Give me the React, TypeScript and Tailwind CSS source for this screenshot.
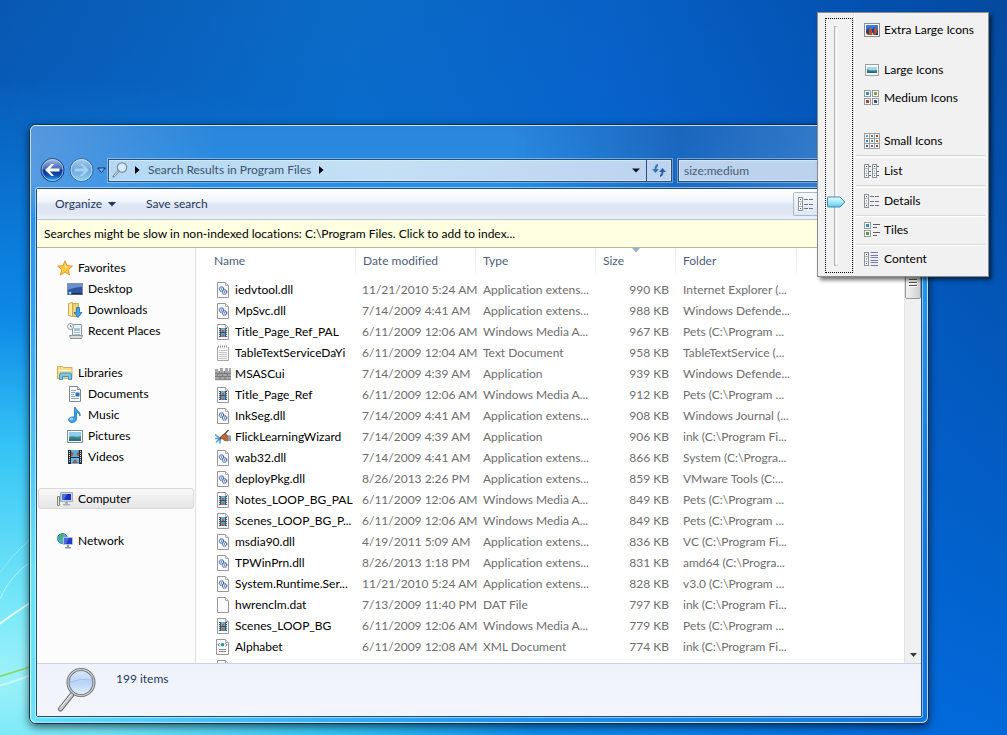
import { useState } from "react";
import type { ReactNode } from "react";

type FileKind = "dll" | "video" | "text" | "wall" | "flick" | "blank" | "xml";

interface FileRow {
  kind: FileKind;
  name: string;
  date: string;
  type: string;
  size: string;
  folder: string;
}

const EXT = "Application extens...";
const WMA = "Windows Media A...";

const files: FileRow[] = [
  { kind: "dll", name: "iedvtool.dll", date: "11/21/2010 5:24 AM", type: EXT, size: "990 KB", folder: "Internet Explorer (..." },
  { kind: "dll", name: "MpSvc.dll", date: "7/14/2009 4:41 AM", type: EXT, size: "988 KB", folder: "Windows Defende..." },
  { kind: "video", name: "Title_Page_Ref_PAL", date: "6/11/2009 12:06 AM", type: WMA, size: "967 KB", folder: "Pets (C:\\Program ..." },
  { kind: "text", name: "TableTextServiceDaYi", date: "6/11/2009 12:04 AM", type: "Text Document", size: "958 KB", folder: "TableTextService (..." },
  { kind: "wall", name: "MSASCui", date: "7/14/2009 4:39 AM", type: "Application", size: "939 KB", folder: "Windows Defende..." },
  { kind: "video", name: "Title_Page_Ref", date: "6/11/2009 12:06 AM", type: WMA, size: "912 KB", folder: "Pets (C:\\Program ..." },
  { kind: "dll", name: "InkSeg.dll", date: "7/14/2009 4:41 AM", type: EXT, size: "908 KB", folder: "Windows Journal (..." },
  { kind: "flick", name: "FlickLearningWizard", date: "7/14/2009 4:39 AM", type: "Application", size: "906 KB", folder: "ink (C:\\Program Fi..." },
  { kind: "dll", name: "wab32.dll", date: "7/14/2009 4:41 AM", type: EXT, size: "866 KB", folder: "System (C:\\Progra..." },
  { kind: "dll", name: "deployPkg.dll", date: "8/26/2013 2:26 PM", type: EXT, size: "859 KB", folder: "VMware Tools (C:..." },
  { kind: "video", name: "Notes_LOOP_BG_PAL", date: "6/11/2009 12:06 AM", type: WMA, size: "849 KB", folder: "Pets (C:\\Program ..." },
  { kind: "video", name: "Scenes_LOOP_BG_P...", date: "6/11/2009 12:06 AM", type: WMA, size: "849 KB", folder: "Pets (C:\\Program ..." },
  { kind: "dll", name: "msdia90.dll", date: "4/19/2011 5:09 AM", type: EXT, size: "836 KB", folder: "VC (C:\\Program Fi..." },
  { kind: "dll", name: "TPWinPrn.dll", date: "8/26/2013 1:18 PM", type: EXT, size: "831 KB", folder: "amd64 (C:\\Progra..." },
  { kind: "dll", name: "System.Runtime.Ser...", date: "11/21/2010 5:24 AM", type: EXT, size: "828 KB", folder: "v3.0 (C:\\Program ..." },
  { kind: "blank", name: "hwrenclm.dat", date: "7/13/2009 11:40 PM", type: "DAT File", size: "797 KB", folder: "ink (C:\\Program Fi..." },
  { kind: "video", name: "Scenes_LOOP_BG", date: "6/11/2009 12:06 AM", type: WMA, size: "779 KB", folder: "Pets (C:\\Program ..." },
  { kind: "xml", name: "Alphabet", date: "6/11/2009 12:08 AM", type: "XML Document", size: "774 KB", folder: "ink (C:\\Program Fi..." },
  { kind: "blank", name: "", date: "", type: "", size: "", folder: "" },
];

function Svg({ children, size = 16 }: { children: ReactNode; size?: number }) {
  return (
    <svg width={size} height={size} viewBox="0 0 16 16" className="block shrink-0" aria-hidden="true">
      {children}
    </svg>
  );
}

function Page() {
  return (
    <>
      <path d="M2.5 .5h8l3 3v12h-11z" fill="#fbfbfb" stroke="#989898" />
      <path d="M10.5.5v3h3" fill="#e4e4e4" stroke="#b0b0b0" />
    </>
  );
}

function FileIcon({ kind }: { kind: FileKind }) {
  switch (kind) {
    case "dll":
      return (
        <Svg>
          <Page />
          <circle cx="6.5" cy="7" r="2.2" fill="#eef4fc" stroke="#3f62a8" strokeWidth="1.2" strokeDasharray="1.200 .4" />
          <circle cx="9.6" cy="10" r="2.2" fill="#eef4fc" stroke="#3f62a8" strokeWidth="1.2" strokeDasharray="1.200 .4" />
          <circle cx="6.5" cy="7" r=".7" fill="#3f62a8" />
          <circle cx="9.6" cy="10" r=".7" fill="#3f62a8" />
        </Svg>
      );
    case "video":
      return (
        <Svg>
          <Page />
          <rect x="4" y="4" width="8" height="9" fill="#46525c" />
          <rect x="6" y="4" width="4" height="4" fill="#62b2e0" />
          <rect x="6" y="9" width="4" height="4" fill="#4b9fd6" />
          <rect x="7" y="6" width="2" height="2" fill="#b8604a" />
          <rect x="7" y="11" width="2" height="2" fill="#b8604a" />
          <path d="M4 5h1v1H4zM4 7h1v1H4zM4 9h1v1H4zM4 11h1v1H4zM11 5h1v1h-1zM11 7h1v1h-1zM11 9h1v1h-1zM11 11h1v1h-1z" fill="#dfe5e9" />
        </Svg>
      );
    case "text":
      return (
        <Svg>
          <path d="M2.5 2v13.5h11V2" fill="#f7f7f7" stroke="#a5a5a5" />
          <path d="M3 1.5h10" stroke="#8c8c8c" strokeWidth="2" strokeDasharray="1 1" />
          <path d="M4 5.5h8M4 7.5h8M4 9.5h8M4 11.5h8M4 13.5h8" stroke="#c3c6c8" />
        </Svg>
      );
    case "wall":
      return (
        <Svg>
          <path d="M0 3h3v2h2V2h3v3h2V2h3v3h1V2h2v12H0z" fill="#a6a6a6" />
          <path d="M0 7.5h16M0 10.5h16M4.5 5v2M9.5 5v2M2.5 8v2M7.5 8v2M12.5 8v2M5 11v3M10 11v3" stroke="#707070" strokeWidth=".8" />
          <path d="M0 13.7h16" stroke="#858585" />
        </Svg>
      );
    case "flick":
      return (
        <Svg>
          <path d="M0 5.500l5 4M1 13.500l5-5M0 9.500h5M5 14.500v-4" stroke="#4ba3e0" strokeWidth="1.600" />
          <path d="M4.500 10.500L13.500 1" stroke="#4b4f58" strokeWidth="1.400" />
          <path d="M5 9.500c1-3 4-5 6-4l2.500 1.500v4.500c-3 1-4.500-.5-6-1.500z" fill="#b9693a" stroke="#7e4320" strokeWidth=".7" />
          <path d="M13 6.500h3v5.500h-3z" fill="#8aa0b6" />
        </Svg>
      );
    case "xml":
      return (
        <Svg>
          <path d="M1.5 .5h9l3 3v12h-12z" fill="#fbfbfb" stroke="#989898" />
          <path d="M10.5.5v3h3" fill="#e4e4e4" stroke="#b0b0b0" />
          <circle cx="7.5" cy="5.8" r="1.8" fill="#18a08c" />
          <path d="M4.600 4.200L3 5.800l1.600 1.600M10.400 4.200L12 5.800l-1.600 1.600" stroke="#55606e" fill="none" />
          <path d="M4 10.5h7M4 12.5h7" stroke="#888" />
        </Svg>
      );
    default:
      return (
        <Svg>
          <Page />
        </Svg>
      );
  }
}

const navIcons: Record<string, ReactNode> = {
  Favorites: (
    <Svg>
      <path d="M8 .8l2 5 5.4.3-4.2 3.500 1.400 5.400L8 12l-4.600 3 1.400-5.400L.6 6.100 6 5.800z" fill="#ffc93c" stroke="#e8922a" />
      <path d="M8 2.800l1.200 3.600L12 6.800 8 8.500z" fill="#ffeb9a" />
    </Svg>
  ),
  Desktop: (
    <Svg>
      <rect x=".5" y="2.500" width="15" height="11" fill="#2a56a4" stroke="#7d8ea6" />
      <path d="M1 3h14v3C10 6 5 7 1 9z" fill="#6690d0" />
      <path d="M1 12h14v1.500H1z" fill="#1d2c44" />
      <circle cx="3" cy="12" r="1.500" fill="#8fd0f0" />
    </Svg>
  ),
  Downloads: (
    <Svg>
      <path d="M1.500 1.500l4-1v14l-4-1z" fill="#fbe9a4" stroke="#cfa94a" />
      <path d="M5.500 1.500h6v13h-6z" fill="#f0cf70" stroke="#cfa94a" />
      <path d="M9.500 5.500h3v5h2.500l-4 5-4-5h2.500z" fill="#3fa3ea" stroke="#1f6db8" strokeWidth=".8" />
    </Svg>
  ),
  "Recent Places": (
    <Svg>
      <path d="M5.500 1.500h9v11h-9z" fill="#eef3f5" stroke="#8e979c" />
      <path d="M7 5h6v3H7z" fill="#9cc9da" />
      <path d="M2.500 12.500h13l-1 3h-11z" fill="#d8dcdf" stroke="#8e979c" />
      <path d="M7 9.500h6M7 11.500h6" stroke="#b3babe" />
      <circle cx="3.500" cy="3.500" r="3" fill="#f5f7f8" stroke="#8e979c" />
      <path d="M3.500 2v1.800h1.300" stroke="#555" fill="none" strokeWidth=".8" />
    </Svg>
  ),
  Libraries: (
    <Svg>
      <path d="M.5 1.500h5l1 1h8.500v11H.5z" fill="#f5dc8c" stroke="#cfae5c" />
      <path d="M1 5.500h13.500" stroke="#fff4c8" />
      <path d="M2.500 14.500v-4.500q0-2 2-2h8q2 0 2 2v4.500h-3v-3h-6v3z" fill="#7dc6e6" stroke="#3f93bd" />
    </Svg>
  ),
  Documents: (
    <Svg>
      <path d="M2.500 .5h8l3 3v12h-11z" fill="#fdfdfe" stroke="#7d8794" />
      <path d="M10.500.5v3h3" fill="#dfe6ee" stroke="#7d8794" />
      <path d="M4 4.500h5M4 6.500h4M4 8.500h3M4 10.500h4M4 12.500h8" stroke="#8fa5c4" />
      <path d="M8.500 6.500h4v4h-4z" fill="#2c6fbd" />
    </Svg>
  ),
  Music: (
    <Svg>
      <path d="M8.500 .5c.5 3 5.500 4 4.500 8.500-.5-2.500-2-3.200-3.500-3.500V12c0 2-2 3.500-4.500 3.500S1.500 14 1.500 12.500 4 9.500 7.500 10V.5z" fill="#3fa0e8" stroke="#2274bd" strokeWidth=".8" />
      <ellipse cx="4.500" cy="12" rx="1.800" ry="1.200" fill="#9bd4f8" />
    </Svg>
  ),
  Pictures: (
    <Svg>
      <rect x=".5" y="2.500" width="15" height="12" fill="#fff" stroke="#818b96" />
      <rect x="2" y="4" width="12" height="9" fill="#8fcbf2" />
      <path d="M2 9c3-2 8 1 12-1v5H2z" fill="#3d8f6a" />
      <path d="M2 11c4-1 8 0 12 0v2H2z" fill="#24719b" />
    </Svg>
  ),
  Videos: (
    <Svg>
      <rect x="1" y="1" width="14" height="14" fill="#1f2d38" />
      <rect x="4" y="1" width="8" height="7" fill="#59aee0" />
      <rect x="4" y="9" width="8" height="6" fill="#6cb9e6" />
      <path d="M4 2l3 3-2 2H4zM12 2L9 5l2 2h1zM5 14l3-4 3 4z" fill="#a8543f" />
      <path d="M2 2h1v1H2zM2 4h1v1H2zM2 6h1v1H2zM2 8h1v1H2zM2 10h1v1H2zM2 12h1v1H2zM13 2h1v1h-1zM13 4h1v1h-1zM13 6h1v1h-1zM13 8h1v1h-1zM13 10h1v1h-1zM13 12h1v1h-1z" fill="#e8eef2" />
    </Svg>
  ),
  Computer: (
    <Svg>
      <path d="M.5 5.500h2v9h-2z" fill="#dfe7de" stroke="#7c8a7c" />
      <path d="M3.500 1.500h12v9h-12z" fill="#cfd6df" stroke="#a2abb6" />
      <path d="M5 3h9v6H5z" fill="#1530c4" />
      <path d="M5 3h5L7 9H5z" fill="#4c6de0" />
      <path d="M8 11h3v2h2v1.500H6V13h2z" fill="#a9b1bb" />
    </Svg>
  ),
  Network: (
    <Svg>
      <circle cx="5.500" cy="5.500" r="5" fill="#48aede" stroke="#2d7fb5" />
      <path d="M2 3c2-2 4-2 5-1L5 5 2 7zM5 8l3-1v3H5z" fill="#4cb84a" />
      <path d="M6.500 4.500h9v7h-9z" fill="#1f3ccc" stroke="#b9c3d0" />
      <path d="M7 5h5l-3 6H7z" fill="#4a6ce0" />
      <path d="M10 12h2v2h2v1.500H8V14h2z" fill="#8b95a3" />
    </Svg>
  ),
};

function NavItem({ label, child, selected }: { label: string; child?: boolean; selected?: boolean }) {
  return (
    <a
      href="#"
      className={`flex h-[21px] items-center gap-[5px] rounded-[3px] border text-black ${child ? "pl-7" : "pl-[18px]"} ${
        selected ? "border-[#d9d9d9] bg-linear-to-b from-[#f8f8f8] to-[#e6e6e6]" : "border-transparent"
      }`}
    >
      {navIcons[label]}
      <span>{label}</span>
    </a>
  );
}

function Thumb({ x, y, fill }: { x: number; y: number; fill: string }) {
  return (
    <>
      <rect x={x + 0.5} y={y + 0.5} width="6" height="6" fill="#fff" stroke="#989ca2" />
      <rect x={x + 2} y={y + 2} width="3" height="3" fill={fill} />
    </>
  );
}

function MiniColumn({ x }: { x: number }) {
  return (
    <>
      <rect x={x + 0.5} y="1.500" width="4" height="13" fill="#fff" stroke="#8c9199" />
      <path d={`M${x + 1} 5.500h3M${x + 1} 10.500h3`} stroke="#b4b8be" />
      <path d={`M${x + 2} 3.500h1M${x + 2} 8h1M${x + 2} 12.500h1`} stroke="#3a5a8a" />
    </>
  );
}

function DetailsIcon() {
  return (
    <Svg>
      <MiniColumn x={0} />
      <path d="M6 3.500h4M11 3.500h4M6 8.500h4M11 8.500h4M6 12.500h4M11 12.500h4" stroke="#6c7484" />
    </Svg>
  );
}

const grid = ["#3d9bd0", "#4c8a3a", "#a33d30", "#4776c4", "#2a9a8c", "#c76a2e", "#3f5f9e", "#8b4ab0", "#a33d30"];

const viewIcons: Record<string, ReactNode> = {
  "Extra Large Icons": (
    <Svg>
      <rect x=".5" y="1.500" width="15" height="13" fill="#fff" stroke="#8a8f96" />
      <rect x="2" y="3" width="12" height="10" fill="#3b7ad6" />
      <path d="M2 8l3-2 2 3 3-4 4 4v4H2z" fill="#26407e" />
      <path d="M5 7h3v6H5zM10 6h3v5l-3 2z" fill="#c3472c" />
      <path d="M2 11l3 2H2zM8 10l2 3H8z" fill="#eec04a" />
    </Svg>
  ),
  "Large Icons": (
    <Svg>
      <rect x="1.500" y="2.500" width="13" height="11" fill="#fff" stroke="#9a9fa6" />
      <rect x="3" y="5" width="10" height="6" fill="#a5d6f6" />
      <path d="M3 7c3 2 6 1 10 1v3H3z" fill="#3a9470" />
      <path d="M3 9.500h10V11H3z" fill="#206b99" />
    </Svg>
  ),
  "Medium Icons": (
    <Svg>
      <Thumb x={0} y={0} fill="#2f8ac0" />
      <Thumb x={8} y={0} fill="#7ca23a" />
      <Thumb x={0} y={8} fill="#a5402c" />
      <Thumb x={8} y={8} fill="#30508c" />
    </Svg>
  ),
  "Small Icons": (
    <Svg>
      {grid.map((fill, i) => (
        <g key={i}>
          <rect x={(i % 3) * 5 + 0.5} y={Math.floor(i / 3) * 5 + 0.5} width="5" height="5" fill="#fff" stroke="#9a9fa6" />
          <rect x={(i % 3) * 5 + 2} y={Math.floor(i / 3) * 5 + 2} width="2" height="2" fill={fill} />
        </g>
      ))}
    </Svg>
  ),
  List: (
    <Svg>
      <MiniColumn x={0} />
      <path d="M5 3.500h2M5 8.500h2M5 12.500h2M13 3.500h2M13 8.500h2M13 12.500h2" stroke="#5f6878" />
      <MiniColumn x={8} />
    </Svg>
  ),
  Details: <DetailsIcon />,
  Tiles: (
    <Svg>
      <Thumb x={0} y={0} fill="#2f8ac0" />
      <Thumb x={0} y={8} fill="#5c9a3a" />
      <path d="M9 2.500h7M9 5.500h4M9 10.500h7M9 13.500h4" stroke="#5a6068" />
    </Svg>
  ),
  Content: (
    <Svg>
      <MiniColumn x={0} />
      <path d="M6.500 1.500H14M6.500 4.500H14M6.500 6.500H14M6.500 9.500H14M6.500 11.500H14M6.500 14.500H14" stroke="#707ab0" />
    </Svg>
  ),
};

const views: { label: string; className: string; divider?: string }[] = [
  { label: "Extra Large Icons", className: "h-[34px] mb-[9px]" },
  { label: "Large Icons", className: "h-7" },
  { label: "Medium Icons", className: "h-7 mb-[15px]" },
  { label: "Small Icons", className: "h-7" },
  { label: "List", className: "h-7", divider: "h-0.5" },
  { label: "Details", className: "h-7", divider: "h-0.5" },
  { label: "Tiles", className: "h-7", divider: "h-px" },
  { label: "Content", className: "h-7", divider: "h-px" },
];

function ViewMenu() {
  const [level, setLevel] = useState(28);
  return (
    <div className="absolute top-3 right-[18px] flex min-w-[172px] border border-[#8c8c8c] bg-[#f1f1f1] pr-[3px] pb-[3px] shadow-[3px_3px_4px_rgba(0,0,0,0.55)]">
      <div className="flex border-r border-[#e2e3e3] pt-[5px] pl-[7px] shadow-[1px_0_0_#fff]">
        <div className="relative flex w-7 flex-col items-start border border-dotted border-black pt-[7px] pb-[6px] pl-2">
          <div className="w-[3px] grow border border-[#b9b9b9] border-r-white bg-[#e7eaea]" />
          <svg
            className="absolute left-px"
            style={{ bottom: `${Math.round((level * 238) / 100) - 3}px` }}
            width="19"
            height="12"
            viewBox="0 0 19 12"
            aria-hidden="true"
          >
            <defs>
              <linearGradient id="knob" x1="0" y1="0" x2="0" y2="1">
                <stop offset="0" stopColor="#e8fbff" />
                <stop offset=".5" stopColor="#a5e6fa" />
                <stop offset="1" stopColor="#5cc8ee" />
              </linearGradient>
            </defs>
            <path d="M1.500 1h11.500l5 5-5 5H1.500q-1 0-1-1V2q0-1 1-1z" fill="url(#knob)" stroke="#3c8db0" />
          </svg>
          <input
            type="range"
            aria-label="Icon size"
            value={level}
            onChange={(e) => setLevel(Number(e.target.value))}
            className="absolute inset-0 h-full w-full opacity-0 [direction:rtl] [writing-mode:vertical-lr]"
          />
        </div>
      </div>
      <div className="flex grow flex-col pl-[2px]">
        {views.map((v) => (
          <div key={v.label} className="flex flex-col">
            {v.divider && <div className={`${v.divider} border-t border-[#dadada] shadow-[0_1px_0_#fff]`} />}
            <button type="button" className={`flex items-center gap-1 pr-2 pl-2 text-left text-black ${v.className}`}>
              {viewIcons[v.label]}
              <span>{v.label}</span>
            </button>
          </div>
        ))}
      </div>
    </div>
  );
}

function Wallpaper() {
  return (
    <div className="absolute inset-0 bg-[linear-gradient(90deg,#0858b2_0%,#0a6ac6_35%,#0861c6_60%,#0351b0_85%,#044a9e_100%)]">
      <div className="absolute inset-0 bg-[linear-gradient(180deg,transparent_0%,rgba(0,120,250,0.3)_50%,rgba(0,125,255,0.6)_100%)]" />
      <div className="absolute inset-0 bg-[radial-gradient(ellipse_900px_600px_at_0%_92%,#9df2f8_0%,#6fe4f8_15%,#35c4f6_38%,rgba(16,150,240,0.75)_60%,transparent_100%)]" />
      <svg className="absolute bottom-0 left-0" width="60" height="220" viewBox="0 0 60 220" fill="none" aria-hidden="true">
        <path d="M-2 60Q12 40 30 24" stroke="#8fe6fa" />
        <path d="M-2 110Q14 98 36 84" stroke="#dffcff" strokeWidth="2" />
        <path d="M-2 162Q14 157 36 150" stroke="#84d860" strokeWidth="1.500" />
        <path d="M-2 171Q14 167 36 158" stroke="#c8f8f4" strokeWidth="2" />
        <path d="M0 84Q10 60 32 46" stroke="#b8f2fb" />
      </svg>
    </div>
  );
}

function NavigationBar() {
  return (
    <div className="relative flex items-center">
      <div className="ml-1 flex items-center gap-1">
        <button type="button" aria-label="Back">
          <svg className="block" width="25" height="26" viewBox="0 0 25 26" aria-hidden="true">
            <defs>
              <linearGradient id="back" x1="0" y1="0" x2="0" y2="1">
                <stop offset="0" stopColor="#a9bfe6" />
                <stop offset=".46" stopColor="#3f68b8" />
                <stop offset=".5" stopColor="#0d2f86" />
                <stop offset=".75" stopColor="#0d52b8" />
                <stop offset="1" stopColor="#35c2ff" />
              </linearGradient>
            </defs>
            <circle cx="12.500" cy="13" r="11.500" fill="url(#back)" stroke="#1c3f78" />
            <circle cx="12.500" cy="13" r="10.500" fill="none" stroke="#c9dcf4" strokeOpacity=".7" />
            <path d="M5 13l6.500-6h2.500l-4 4.500h9.500v3H10L14 19h-2.500z" fill="#fff" />
          </svg>
        </button>
        <button type="button" aria-label="Forward">
          <svg className="block" width="25" height="26" viewBox="0 0 25 26" aria-hidden="true">
            <defs>
              <linearGradient id="fwd" x1="0" y1="0" x2="0" y2="1">
                <stop offset="0" stopColor="#a9cdec" />
                <stop offset=".5" stopColor="#6ba8dc" />
                <stop offset="1" stopColor="#8fd0f4" />
              </linearGradient>
            </defs>
            <circle cx="12.500" cy="13" r="11.500" fill="url(#fwd)" stroke="#2f629c" />
            <circle cx="12.500" cy="13" r="10.500" fill="none" stroke="#d5e8f8" strokeOpacity=".7" />
            <path d="M20 13l-6.500-6H11l4 4.500H5.500v3H15L11 19h2.500z" fill="#a8d2f2" />
          </svg>
        </button>
      </div>
      <button type="button" aria-label="Recent pages" className="flex w-[14px] justify-center">
        <svg width="9" height="7" viewBox="0 0 9 7" aria-hidden="true">
          <path d="M.7 1h7.600L4.500 5.500z" fill="#7cb8ee" stroke="#0e2f66" />
        </svg>
      </button>
      <div className="flex h-[23px] grow items-stretch border border-[#27507f] bg-linear-to-r from-[#b4d8f4] via-[#c4e0f5] to-[#bdd3ee] shadow-[0_0_0_1px_rgba(255,255,255,0.35),inset_0_0_0_1px_rgba(255,255,255,0.4)]">
        <div className="flex grow items-center">
          <svg className="mx-[3px]" width="16" height="16" viewBox="0 0 16 16" fill="none" aria-hidden="true">
            <circle cx="10" cy="5.500" r="4.700" fill="#d5ebfa" stroke="#7b8d9d" strokeWidth="1.200" />
            <path d="M6.500 9L1.500 14.500" stroke="#7b8d9d" strokeWidth="2.200" strokeLinecap="round" />
            <path d="M6.300 9.200L2 14" stroke="#e8eef2" strokeWidth=".8" />
          </svg>
          <svg className="mx-1" width="5" height="8" viewBox="0 0 5 8" aria-hidden="true">
            <path d="M0 0l4.500 4L0 8z" fill="#000" />
          </svg>
          <a href="#" className="mx-1 text-[#3d5468]">
            Search Results in Program Files
          </a>
          <svg className="mx-1" width="5" height="8" viewBox="0 0 5 8" aria-hidden="true">
            <path d="M0 0l4.500 4L0 8z" fill="#000" />
          </svg>
        </div>
        <button type="button" aria-label="Previous locations" className="flex w-5 items-center justify-center">
          <svg width="8" height="5" viewBox="0 0 8 5" aria-hidden="true">
            <path d="M0 .5h8L4 4.500z" fill="#0c1030" />
          </svg>
        </button>
        <button type="button" aria-label="Refresh" className="flex w-[25px] items-center justify-center border-l border-[#27507f]">
          <svg width="14" height="13" viewBox="0 0 14 13" fill="none" aria-hidden="true">
            <path d="M6 1Q3.500 1.500 3.500 6" stroke="#2f74bd" strokeWidth="2" />
            <path d="M0 5h7L3.500 9z" fill="#2f74bd" />
            <path d="M8 12q2.500-.5 2.500-5" stroke="#2c5ea8" strokeWidth="2" />
            <path d="M7 8h7l-3.500-4z" fill="#2c5ea8" />
          </svg>
        </button>
      </div>
      <input
        type="text"
        aria-label="Search"
        defaultValue="size:medium"
        className="ml-[6px] h-[23px] w-[244px] border border-[#27507f] bg-[#bcd3ee] px-[5px] text-[#4a5c70] shadow-[0_0_0_1px_rgba(255,255,255,0.35),inset_0_0_0_1px_rgba(255,255,255,0.4)] outline-none"
      />
    </div>
  );
}

function Sidebar() {
  return (
    <nav className="w-[159px] shrink-0 border-r border-[#d6e2f2] bg-[#fcfcfd] px-px pt-[9px]">
      <div className="mb-[21px]">
        <NavItem label="Favorites" />
        <NavItem label="Desktop" child />
        <NavItem label="Downloads" child />
        <NavItem label="Recent Places" child />
      </div>
      <div className="mb-[21px]">
        <NavItem label="Libraries" />
        <NavItem label="Documents" child />
        <NavItem label="Music" child />
        <NavItem label="Pictures" child />
        <NavItem label="Videos" child />
      </div>
      <div className="mb-[21px]">
        <NavItem label="Computer" selected />
      </div>
      <NavItem label="Network" />
    </nav>
  );
}

function HeaderCell({ label, width, first, sorted }: { label: string; width: string; first?: boolean; sorted?: boolean }) {
  return (
    <th scope="col" className={`h-[31px] p-0 pb-[5px] text-left font-normal text-[#4c607a] ${width}`}>
      <div
        className={`relative flex h-[26px] items-center border-r [border-image:linear-gradient(#dfe9f5,#f4f7fb)_1] ${
          first ? "pl-[18px]" : "pl-[7px]"
        }`}
      >
        {label}
        {sorted && (
          <svg className="absolute top-0 left-1/2 -translate-x-1/2" width="8" height="5" viewBox="0 0 8 5" aria-hidden="true">
            <path d="M0 0h8L4 4.500z" fill="#8fb3d8" />
          </svg>
        )}
      </div>
    </th>
  );
}

function FileTable() {
  return (
    <div className="min-w-0 grow overflow-hidden">
      <table className="w-full table-fixed border-collapse">
        <thead>
          <tr>
            <HeaderCell label="Name" width="w-[160px]" first />
            <HeaderCell label="Date modified" width="w-[120px]" />
            <HeaderCell label="Type" width="w-[120px]" />
            <HeaderCell label="Size" width="w-[80px]" sorted />
            <HeaderCell label="Folder" width="w-[121px]" />
            <td />
          </tr>
        </thead>
        <tbody className="whitespace-nowrap text-[#6d6d6d]">
          {files.map((f, i) => (
            <tr key={i} className="h-[21px]">
              <td className="p-0 pl-[19px]">
                <div className="flex items-center gap-1 text-black">
                  <FileIcon kind={f.kind} />
                  <span>{f.name}</span>
                </div>
              </td>
              <td className="p-0 pl-[6px]">{f.date}</td>
              <td className="p-0 pl-[7px]">{f.type}</td>
              <td className="p-0 pr-[7px] text-right">{f.size}</td>
              <td className="p-0 pl-[7px]">{f.folder}</td>
              <td />
            </tr>
          ))}
        </tbody>
      </table>
    </div>
  );
}

function Scrollbar() {
  return (
    <div className="flex w-[17px] shrink-0 flex-col justify-between border-l border-[#e3e3e3] bg-[#f0f0f0]" aria-hidden="true">
      <div className="mt-[17px] flex h-[34px] flex-col items-center rounded-[2px] border border-[#979797] bg-linear-to-r from-[#f3f3f3] to-[#cfcfcf] pt-[13px]">
        <div className="h-[9px] w-2 bg-[repeating-linear-gradient(#555_0_1px,#fff_1px_2px,transparent_2px_3px)]" />
      </div>
      <svg className="mb-[6px] self-center" width="7" height="4" viewBox="0 0 7 4">
        <path d="M0 0h7L3.500 4z" fill="#3a3a3a" />
      </svg>
    </div>
  );
}

function StatusMagnifier() {
  return (
    <svg width="42" height="46" viewBox="0 0 42 46" fill="none" aria-hidden="true">
      <defs>
        <linearGradient id="lens" x1="0" y1="0" x2="0" y2="1">
          <stop offset="0" stopColor="#dbe9fb" />
          <stop offset=".5" stopColor="#b9d3f5" />
          <stop offset="1" stopColor="#e3f0fd" />
        </linearGradient>
      </defs>
      <path d="M16.500 27L4.500 42" stroke="#5f6468" strokeWidth="5" strokeLinecap="round" />
      <path d="M16.500 27L4.500 42" stroke="#c3c7ca" strokeWidth="3" strokeLinecap="round" />
      <path d="M15.500 27L4 41" stroke="#f6f7f8" strokeWidth="1" />
      <circle cx="25" cy="15.500" r="13" fill="url(#lens)" stroke="#62676b" strokeWidth="3" />
      <circle cx="25" cy="15.500" r="13" stroke="#c6cacd" strokeWidth="1.400" />
      <path d="M14.500 15q10-4 21-2" stroke="#9fc2ee" strokeWidth="1" />
    </svg>
  );
}

export default function App() {
  return (
    <div className="relative h-screen overflow-hidden font-['Lato','Open_Sans',sans-serif] text-[12px] leading-4 [font-variant-ligatures:none]">
      <Wallpaper />
      <div className="absolute top-[124px] right-[78px] bottom-[11px] left-[29px] flex flex-col rounded-[7px] border border-[#12304f] bg-[linear-gradient(90deg,#65e4fb_0px,#40c4f6_180px,#1a90ee_500px,#1277e0_100%)] shadow-[0_3px_9px_rgba(0,0,0,0.6)]">
        <div className="flex min-h-0 grow flex-col rounded-[6px] border border-white/70 bg-[linear-gradient(180deg,#2b86da_0px,#2590e8_65px,rgba(38,150,240,0.9)_160px,transparent_440px)] px-[5px] pb-[5px]">
          <div className="-mx-[5px] -mb-16 h-[95px] shrink-0 rounded-t-[5px] bg-[linear-gradient(90deg,rgba(130,170,225,0.5)_0px,transparent_190px,transparent_480px,rgba(15,75,165,0.55)_650px,rgba(60,110,180,0.5)_790px)] mask-[linear-gradient(#000_60%,transparent)]" />
          <NavigationBar />
          <main className="relative mt-[5px] flex min-h-0 grow flex-col rounded-[2px] border border-[#1d4c7c] bg-white shadow-[0_0_0_1px_rgba(255,255,255,0.5)]">
            <div className="flex h-[31px] shrink-0 items-center border-b border-[#b4c4d8] bg-[linear-gradient(#fff,#f2f7fd_40%,#dfe6f3_50%,#e0e7f4_80%,#eaf1f9)] pl-[18px] text-[#1e395b]">
              <button type="button" className="flex w-[61px] items-center justify-between">
                Organize
                <svg width="8" height="5" viewBox="0 0 8 5" aria-hidden="true">
                  <path d="M0 0h8L4 4.500z" fill="#1e395b" />
                </svg>
              </button>
              <button type="button" className="ml-[30px]">
                Save search
              </button>
              <button
                type="button"
                aria-label="Change your view"
                className="mr-[84px] ml-auto flex h-6 w-11 items-center rounded-[2px] border border-[#a9b9cf] bg-linear-to-b from-[#f6f9fd] to-[#dfe7f3] pl-1"
              >
                <DetailsIcon />
              </button>
            </div>
            <button type="button" className="h-7 shrink-0 border-b border-[#b7b79a] bg-[#ffffe1] pl-[7px] text-left text-black">
              Searches might be slow in non-indexed locations: C:\Program Files. Click to add to index...
            </button>
            <div className="flex min-h-0 grow">
              <Sidebar />
              <FileTable />
              <Scrollbar />
            </div>
            <footer className="flex h-[53px] shrink-0 items-start border-t border-[#c9d3e3] bg-linear-to-b from-[#eff2fa] to-[#f2f6fc] pt-[3px] pl-[19px] text-[#1e395b]">
              <StatusMagnifier />
              <span className="mt-1 ml-[18px]">199 items</span>
            </footer>
          </main>
        </div>
      </div>
      <ViewMenu />
    </div>
  );
}
